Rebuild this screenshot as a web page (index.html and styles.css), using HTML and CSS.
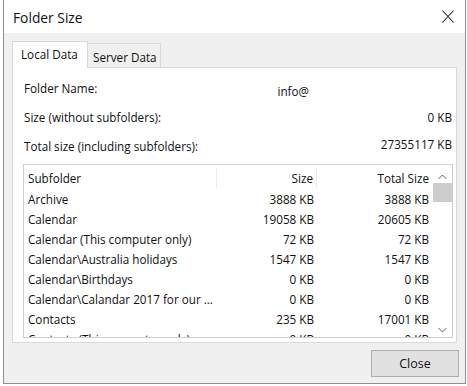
FILE: index.html
```html
<!DOCTYPE html>
<html lang="en">
<head>
    <meta charset="UTF-8">
    <title>Folder Size</title>
    <link rel="stylesheet" href="styles.css">
</head>
<body>
<div class="window">
    <div class="title-bar">
        <div class="title">Folder Size</div>
        <svg class="close-x" width="12" height="13" viewBox="0 0 12 13">
            <path d="M0.5 0.5 L11.5 12.5 M11.5 0.5 L0.5 12.5" stroke="#222" stroke-width="1.1" fill="none"/>
        </svg>
    </div>
    <div class="body">
        <div class="tabs">
            <div class="tab selected">Local Data</div>
            <div class="tab">Server Data</div>
        </div>
        <div class="panel">
            <div class="info-row">
                <span>Folder Name:</span>
                <span class="folder-name">info@</span>
            </div>
            <div class="info-row">
                <span>Size (without subfolders):</span>
                <span>0 KB</span>
            </div>
            <div class="info-row">
                <span>Total size (including subfolders):</span>
                <span class="total-value">27355117 KB</span>
            </div>
            <div class="list">
                <div class="list-rows">
                    <div class="row head">
                        <div class="c-name">Subfolder</div>
                        <div class="c-size">Size</div>
                        <div class="c-total">Total Size</div>
                    </div>
                    <div class="row">
                        <div class="c-name">Archive</div>
                        <div class="c-size">3888 KB</div>
                        <div class="c-total">3888 KB</div>
                    </div>
                    <div class="row">
                        <div class="c-name">Calendar</div>
                        <div class="c-size">19058 KB</div>
                        <div class="c-total">20605 KB</div>
                    </div>
                    <div class="row">
                        <div class="c-name">Calendar (This computer only)</div>
                        <div class="c-size">72 KB</div>
                        <div class="c-total">72 KB</div>
                    </div>
                    <div class="row">
                        <div class="c-name">Calendar\Australia holidays</div>
                        <div class="c-size">1547 KB</div>
                        <div class="c-total">1547 KB</div>
                    </div>
                    <div class="row">
                        <div class="c-name">Calendar\Birthdays</div>
                        <div class="c-size">0 KB</div>
                        <div class="c-total">0 KB</div>
                    </div>
                    <div class="row">
                        <div class="c-name">Calendar\Calandar 2017 for our ...</div>
                        <div class="c-size">0 KB</div>
                        <div class="c-total">0 KB</div>
                    </div>
                    <div class="row">
                        <div class="c-name">Contacts</div>
                        <div class="c-size">235 KB</div>
                        <div class="c-total">17001 KB</div>
                    </div>
                    <div class="row">
                        <div class="c-name">Contacts (This computer only)</div>
                        <div class="c-size">0 KB</div>
                        <div class="c-total">0 KB</div>
                    </div>
                </div>
                <div class="scrollbar">
                    <svg class="arrow" width="9" height="6" viewBox="0 0 9 6">
                        <path d="M0.5 5 L4.5 1 L8.5 5" stroke="#606060" stroke-width="1" fill="none"/>
                    </svg>
                    <div class="thumb"></div>
                    <div class="track"></div>
                    <svg class="arrow" width="9" height="6" viewBox="0 0 9 6">
                        <path d="M0.5 1 L4.5 5 L8.5 1" stroke="#606060" stroke-width="1" fill="none"/>
                    </svg>
                </div>
            </div>
        </div>
        <div class="buttons">
            <button class="close-button">Close</button>
        </div>
    </div>
</div>
</body>
</html>
```
FILE: styles.css
```css
* {
    box-sizing: border-box;
    margin: 0;
    padding: 0;
}

body {
    background: #fff;
    font-family: "Open Sans", "Noto Sans", sans-serif;
    font-size: 11.7px;
    color: #111;
}

.window {
    margin-left: 3px;
    width: 463px;
    height: 384px;
    border: 1px solid #8f8f8f;
    border-top: none;
    display: flex;
    flex-direction: column;
}

.title-bar {
    height: 33px;
    background: #fff;
    display: flex;
    align-items: center;
    justify-content: space-between;
    padding: 0 11px 0 9px;
}

.title {
    font-size: 13.8px;
    margin-top: 1px;
}

.close-x {
    margin-top: -1px;
}

.body {
    flex: 1;
    background: #f0f0f0;
    padding: 8px 6px 6px 8px;
    display: flex;
    flex-direction: column;
}

.tabs {
    display: flex;
    align-items: flex-end;
    height: 26px;
}

.tab {
    height: 24px;
    width: 73px;
    padding: 2px 0 0 5px;
    border: 1px solid #d9d9d9;
    border-left: none;
    border-bottom: none;
    display: flex;
    align-items: center;
    white-space: nowrap;
}

.tab.selected {
    position: relative;
    height: 27px;
    width: 76px;
    margin-bottom: -1px;
    background: #fff;
    border-left: 1px solid #d9d9d9;
    padding: 0 0 2px 8px;
}

.panel {
    width: 445px;
    height: 276px;
    background: #fff;
    border: 1px solid #d9d9d9;
    padding: 5px 4px 0 10px;
    display: flex;
    flex-direction: column;
}

.info-row {
    height: 29px;
    display: flex;
    align-items: center;
    justify-content: space-between;
    padding-left: 1px;
}

.folder-name {
    margin-top: 7px;
    margin-right: 143px;
}

.total-value {
    margin-top: -3px;
}

.list {
    margin-top: 4px;
    height: 174px;
    margin-right: -1px;
    border: 1px solid #cfcfcf;
    display: flex;
    overflow: hidden;
}

.list-rows {
    flex: 1;
    padding-top: 3px;
    overflow: hidden;
}

.row {
    display: grid;
    grid-template-columns: 193px 100px 115px;
    height: 20px;
    align-items: center;
}

.row.head {
    margin-bottom: 1px;
}

.c-name {
    padding-left: 4px;
    white-space: nowrap;
}

.c-size,
.c-total {
    text-align: right;
    padding-right: 3px;
}

.head .c-name,
.head .c-size {
    border-right: 1px solid #ececec;
    height: 20px;
    line-height: 20px;
}

.scrollbar {
    width: 20px;
    background: #fff;
    display: flex;
    flex-direction: column;
    align-items: center;
    padding: 9px 0 4px;
}

.arrow {
    flex-shrink: 0;
}

.thumb {
    width: 19px;
    height: 19px;
    margin-top: 3px;
    background: #cdcdcd;
}

.track {
    flex: 1;
}

.buttons {
    display: flex;
    justify-content: flex-end;
    padding-top: 7px;
}

.close-button {
    width: 88px;
    height: 27px;
    background: #e1e1e1;
    border: 1px solid #adadad;
    font-family: "Open Sans", "Noto Sans", sans-serif;
    font-size: 12.5px;
    color: #111;
}
```
